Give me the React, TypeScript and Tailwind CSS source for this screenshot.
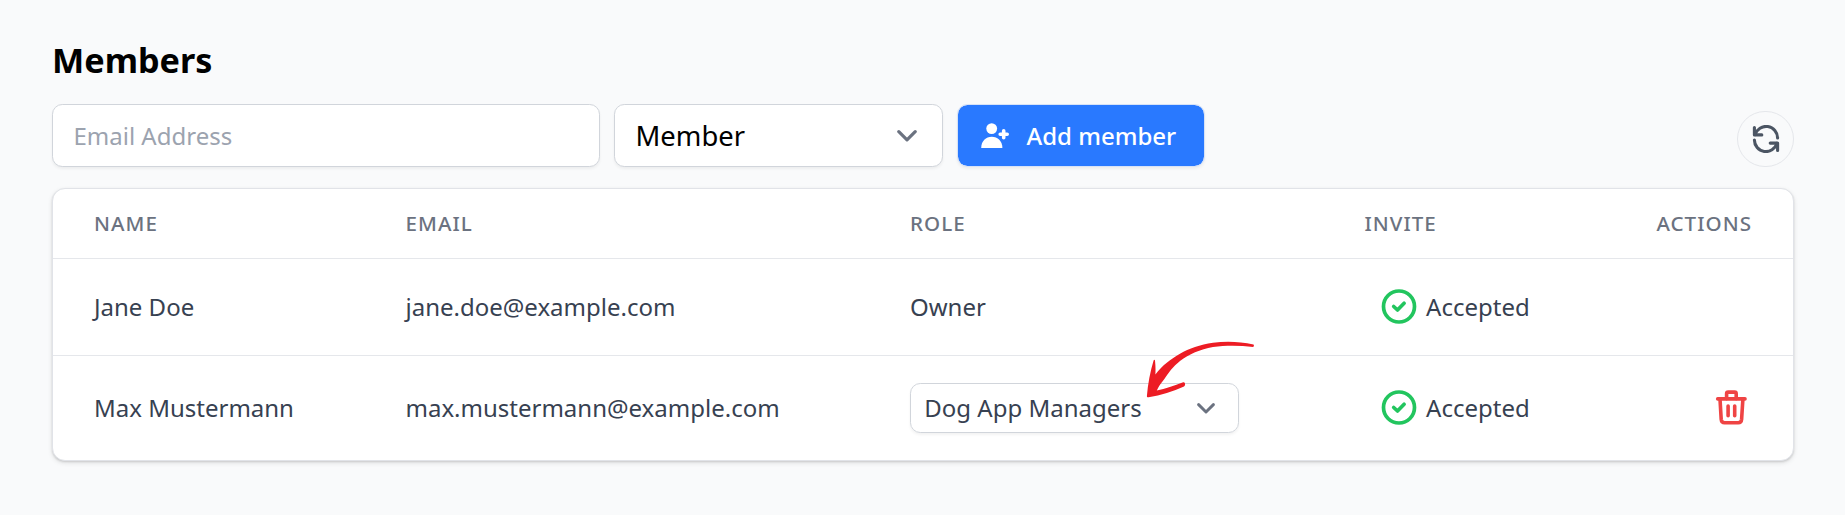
import type { ReactNode } from "react";

function ChevronDown({ className }: { className: string }) {
  return (
    <svg viewBox="0 0 20 12" fill="none" stroke="currentColor" strokeWidth="3.2" strokeLinecap="round" strokeLinejoin="round" className={className}>
      <path d="M1.8 1.7 L10 9.9 L18.2 1.7" />
    </svg>
  );
}

function Accepted() {
  return (
    <div className="flex items-center pl-4">
      <svg viewBox="0 0 36 36" fill="none" stroke="#22c55e" strokeWidth="3.7" strokeLinecap="round" strokeLinejoin="round" className="size-9 shrink-0">
        <circle cx="18" cy="17.5" r="15.5" />
        <path d="M12.7 17.5 L16.5 21 L23.1 14.3" />
      </svg>
      <span className="ml-[9.6px]">Accepted</span>
    </div>
  );
}

function Row({ className, children }: { className: string; children: ReactNode }) {
  return (
    <div className={`grid grid-cols-[311.5px_504.5px_454.5px_267.5px_1fr] items-center pl-[41px] pr-[41px] ${className}`}>
      {children}
    </div>
  );
}

export default function App() {
  return (
    <main className="h-[515px] w-[1845px] bg-[#f9fafb] pl-[52px] pr-[51px] pt-[39px] font-['Noto_Sans',sans-serif] text-[24px] text-[#374151]">
      <h1 className="h-[65px] text-[34.2px] leading-[41px] font-bold text-black">Members</h1>

      <div className="flex h-[63px] items-center">
        <input
          type="email"
          placeholder="Email Address"
          className="h-[63px] w-[548px] rounded-[10.3px] border border-[#d1d5db] bg-white px-[20.5px] text-[24px] shadow-[0_2px_3px_rgba(0,0,0,0.05)] placeholder:text-[#9ca3af]"
        />
        <button className="ml-[14px] flex h-[63px] w-[329px] items-center justify-between rounded-[10.3px] border border-[#d1d5db] bg-white pl-[20.5px] pr-[25px] text-[27.4px] text-black shadow-[0_2px_3px_rgba(0,0,0,0.05)]">
          Member
          <ChevronDown className="h-3 w-5 text-[#6b7280]" />
        </button>
        <button className="ml-[14px] flex h-[63px] w-[248px] items-center rounded-[10.3px] border border-[#d6e2f7] bg-[#2979ff] bg-clip-padding pl-[22px] text-[24px] font-medium text-white shadow-[0_2px_3px_rgba(0,0,0,0.05)]">
          <svg viewBox="0 0 30 26" fill="currentColor" className="h-[26px] w-[30px]">
            <circle cx="11.7" cy="5.6" r="5.4" />
            <path d="M1.2 24.9 C1.2 18.4 5.9 13.8 11.8 13.8 C17.7 13.8 22.4 18.4 22.4 24.9 Z" />
            <path d="M23.7 7.7 V14.7 M20.2 11.2 H27.2" stroke="currentColor" strokeWidth="3.6" strokeLinecap="round" />
          </svg>
          <span className="ml-[16.5px]">Add member</span>
        </button>
        <button aria-label="Refresh" className="mt-[7px] ml-auto flex h-[56px] w-[57px] items-center justify-center rounded-full border border-[#e5e7eb] text-[#4b5563]">
          <svg viewBox="0 0 28 28" fill="none" stroke="currentColor" strokeWidth="3.1" strokeLinecap="round" strokeLinejoin="round" className="size-7">
            <path d="M2.4 2.6 V9.9 H9.8" />
            <path d="M3.1 9.6 A11.5 11.5 0 0 1 25.6 13" />
            <path d="M25.6 25.4 V18.1 H18.2" />
            <path d="M24.9 18.4 A11.5 11.5 0 0 1 2.4 15" />
          </svg>
        </button>
      </div>

      <section className="mt-[21px] h-[273px] overflow-hidden rounded-[13px] border border-[#e1e3e8] bg-white shadow-[0_2px_5px_rgba(0,0,0,0.1),0_1px_2px_rgba(0,0,0,0.12)]">
        <Row className="h-[70px] border-b border-[#e5e7eb] text-[20.57px] font-medium tracking-[0.05em] text-[#6b7280]">
          <span>NAME</span>
          <span>EMAIL</span>
          <span>ROLE</span>
          <span>INVITE</span>
          <span className="text-right">ACTIONS</span>
        </Row>
        <Row className="h-[97px] border-b border-[#e5e7eb]">
          <span>Jane Doe</span>
          <span>jane.doe@example.com</span>
          <span>Owner</span>
          <Accepted />
        </Row>
        <Row className="h-[104px]">
          <span>Max Mustermann</span>
          <span>max.mustermann@example.com</span>
          <div className="relative">
            <button className="flex h-[50px] w-[329px] items-center justify-between rounded-[10.3px] border border-[#d1d5db] pl-[13.3px] pr-[23px] shadow-[0_2px_3px_rgba(0,0,0,0.05)]">
              Dog App Managers
              <ChevronDown className="h-[11px] w-[18px] text-[#6b7280]" />
            </button>
            <svg viewBox="0 0 108 58" fill="#ed1c24" className="pointer-events-none absolute -top-[43px] left-[236px] h-[58px] w-[108px] blur-[0.5px]">
              <path d="M107.5 4.4 C94 1.6 80 1 67 2.8 C54 4.8 43 8.6 34 13.8 C25 19 16 25.4 9.4 34.6 C9.6 30 9.6 25.4 9 20.4 C8.8 19.4 8 19.4 7.6 20.4 C4.4 31 1.8 44 0.9 56 C1 57.4 1.6 57.4 2.6 57.2 C15 55.2 27 51.4 38 46.4 C39.8 45.2 39.2 41.6 37.2 42.2 C28 45.6 19.5 48.8 10.8 50.4 C12.5 46.6 14.8 43.6 17.8 39.8 C22.4 32.8 27 26.6 34 21 C43 14.2 54 9.4 67 7 C80 5.2 94 5.4 107.2 7 C108 6.4 108.2 5 107.5 4.4 Z" />
            </svg>
          </div>
          <Accepted />
          <svg viewBox="0 0 32 36" fill="none" stroke="#ef4444" strokeWidth="3.6" strokeLinecap="round" strokeLinejoin="round" className="mr-[5px] h-9 w-8 justify-self-end">
            <path d="M2.7 8.9 H30" />
            <path d="M11.6 8.6 V3.7 Q11.6 2.1 13.2 2.1 H19.6 Q21.2 2.1 21.2 3.7 V8.6" />
            <path d="M5 9 L6.2 29.4 Q6.5 32.8 9.6 32.8 H23.2 Q26.3 32.8 26.6 29.4 L27.9 9" />
            <path d="M13.1 16 V25.8 M19.7 16 V25.8" />
          </svg>
        </Row>
      </section>
    </main>
  );
}
